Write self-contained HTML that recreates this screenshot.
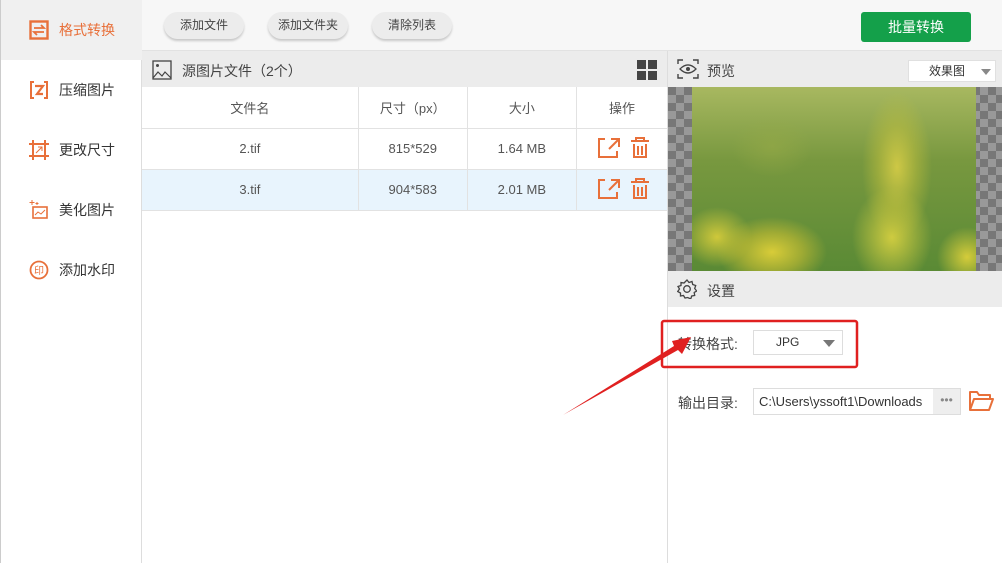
<!DOCTYPE html>
<html><head><meta charset="utf-8">
<style>
*{margin:0;padding:0;box-sizing:border-box}
body{width:1002px;height:563px;overflow:hidden;background:#fff;font-family:"Liberation Sans","Microsoft YaHei","Noto Sans CJK SC",sans-serif;color:#333;font-size:13px;position:relative}
.abs{position:absolute}
.side{left:0;top:0;width:142px;height:563px;background:#fff;border-right:1px solid #ddd;border-left:1px solid #ccc}
.si{position:absolute;left:0;width:141px;height:60px;display:flex;align-items:center;padding-left:28px;font-size:14px;color:#333}
.si svg{margin-right:10px}
.si.act{background:#f0f0f0;color:#e8703a}
.top{left:142px;top:0;width:860px;height:51px;background:#f7f7f7;border-bottom:1px solid #e2e2e2}
.btn{position:absolute;top:12px;height:27px;border-radius:14px;background:#ececec;box-shadow:0 2px 2px #c8c8c8;font-size:12px;color:#444;text-align:center;line-height:27px}
.green{left:861px;top:12px;width:110px;height:30px;background:#14a04a;color:#fff;border-radius:3px;font-size:14px;text-align:center;line-height:30px}
.hdr{background:#ececec;height:36px}
table{border-collapse:collapse}
td{border-right:1px solid #e2e2e2;border-bottom:1px solid #e2e2e2;text-align:center;font-size:13px;color:#555}
</style></head><body>
<div class="abs side">
 <div class="si act" style="top:0"><svg width="20" height="20" viewBox="0 0 20 20"><rect x="1.5" y="1.5" width="17" height="17" fill="none" stroke="#e8703a" stroke-width="2.4"/><path d="M5 8h10l-3-3M15 12H5l3 3" fill="none" stroke="#e8703a" stroke-width="1.8"/></svg>格式转换</div>
 <div class="si" style="top:60px"><svg width="20" height="20" viewBox="0 0 20 20"><path d="M5 2H2v16h3M15 2h3v16h-3" fill="none" stroke="#e8703a" stroke-width="2"/><path d="M6 6h8l-6 8h6" fill="none" stroke="#e8703a" stroke-width="2.2"/></svg>压缩图片</div>
 <div class="si" style="top:120px"><svg width="20" height="20" viewBox="0 0 20 20"><path d="M4 0v20M16 0v20M0 4h20M0 16h20" stroke="#e8703a" stroke-width="2"/><path d="M7 13l6-6M9 7h4v4" fill="none" stroke="#e8703a" stroke-width="1"/></svg>更改尺寸</div>
 <div class="si" style="top:180px"><svg width="20" height="20" viewBox="0 0 20 20"><rect x="4" y="7" width="14" height="11" fill="none" stroke="#e8703a" stroke-width="1.6"/><path d="M6 15l3-3 3 2 4-4" fill="none" stroke="#e8703a"/><path d="M3 0v5M0.5 2.5h5M8 2v3M6.5 3.5h3" stroke="#e8703a"/></svg>美化图片</div>
 <div class="si" style="top:240px"><svg width="20" height="20" viewBox="0 0 20 20"><circle cx="10" cy="10" r="8.5" fill="none" stroke="#e8703a" stroke-width="1.8"/><text x="10" y="14" font-size="10" text-anchor="middle" fill="#e8703a" font-family="Noto Sans CJK SC">印</text></svg>添加水印</div>
</div>
<div class="abs top">
 <div class="btn" style="left:22px;width:80px">添加文件</div>
 <div class="btn" style="left:126px;width:80px">添加文件夹</div>
 <div class="btn" style="left:230px;width:80px">清除列表</div>
</div>
<div class="abs green">批量转换</div>
<div class="abs hdr" style="left:142px;top:51px;width:525px"></div>
<svg class="abs" style="left:152px;top:60px" width="20" height="20" viewBox="0 0 20 20"><rect x="1" y="1" width="18" height="18" fill="none" stroke="#444" stroke-width="1.3"/><circle cx="5.5" cy="5.5" r="1.5" fill="#444"/><path d="M1 18l5-6 4 4 3-4 6 6" fill="none" stroke="#444" stroke-width="1.2"/></svg>
<div class="abs" style="left:182px;top:61px;font-size:14px;color:#444">源图片文件（2个）</div>
<svg class="abs" style="left:637px;top:60px" width="20" height="20"><rect x="0" y="0" width="9" height="9" fill="#444"/><rect x="11" y="0" width="9" height="9" fill="#444"/><rect x="0" y="11" width="9" height="9" fill="#444"/><rect x="11" y="11" width="9" height="9" fill="#444"/></svg>
<table class="abs" style="left:142px;top:87px;width:526px">
<tr style="height:41px"><td style="width:216px">文件名</td><td style="width:109px">尺寸（px）</td><td style="width:109px">大小</td><td style="width:91px">操作</td></tr>
<tr style="height:41px"><td>2.tif</td><td>815*529</td><td>1.64 MB</td><td class="ops"></td></tr>
<tr style="height:41px;background:#e8f4fd"><td>3.tif</td><td>904*583</td><td>2.01 MB</td><td></td></tr>
</table>
<svg class="abs" style="left:597px;top:137px" width="60" height="62" viewBox="0 0 60 62">
<g id="r" fill="none" stroke="#e8703a" stroke-width="2">
<path d="M8 2H2v18h18v-6M12 12l9-9M14 2h8v8"/>
<path d="M34 4h18M39 4V1h8v3M37 7v13h12V7M41 9v9M45 9v9" />
</g>
<use href="#r" y="41"/>
</svg>
<div class="abs" style="left:667px;top:51px;width:1px;height:512px;background:#ddd"></div>
<div class="abs hdr" style="left:668px;top:51px;width:334px"></div>
<svg class="abs" style="left:677px;top:59px" width="22" height="20" viewBox="0 0 22 20"><path d="M1 5V1h5M16 1h5v4M1 15v4h5M16 19h5v-4" fill="none" stroke="#444" stroke-width="1.4"/><path d="M3 10q8-8 16 0q-8 8-16 0z" fill="none" stroke="#444" stroke-width="1.3"/><circle cx="11" cy="10" r="2" fill="#444"/></svg>
<div class="abs" style="left:707px;top:61px;font-size:14px;color:#444">预览</div>
<div class="abs" style="left:908px;top:60px;width:88px;height:22px;background:#fff;border:1px solid #e0e0e0;font-size:12px;line-height:20px;padding-left:20px">效果图<span style="position:absolute;right:4px;top:8px;border:5px solid transparent;border-top:6px solid #888"></span></div>
<div class="abs" style="left:668px;top:87px;width:334px;height:184px;background-color:#777;background-image:linear-gradient(45deg,#999 25%,transparent 25%,transparent 75%,#999 75%),linear-gradient(45deg,#999 25%,transparent 25%,transparent 75%,#999 75%);background-size:16px 16px;background-position:0 0,8px 8px"></div>
<div class="abs" style="left:692px;top:87px;width:284px;height:184px;background:
radial-gradient(ellipse 35px 75px at 205px 80px,rgba(215,205,70,.9) 0%,rgba(190,190,60,.5) 55%,transparent 100%),
radial-gradient(ellipse 55px 35px at 80px 165px,#d8cc38 0%,rgba(200,190,50,.6) 55%,transparent 100%),
radial-gradient(ellipse 35px 30px at 25px 150px,#cfc83a 0%,transparent 100%),
radial-gradient(ellipse 40px 50px at 200px 150px,#cfcc40 0%,transparent 100%),
radial-gradient(ellipse 30px 30px at 275px 170px,#d5cc3a 0%,transparent 100%),
radial-gradient(ellipse 40px 30px at 80px 60px,rgba(150,170,70,.6) 0%,transparent 100%),
linear-gradient(180deg,#a8b860 0%,#78983f 40%,#5a8a35 100%)"></div>
<div class="abs hdr" style="left:668px;top:271px;width:334px"></div>
<svg class="abs" style="left:677px;top:279px" width="20" height="20" viewBox="0 0 20 20"><path d="M10 1l2 2.5 3-1 .7 3 3 1-1 3 2 2.5-2.5 1.5.5 3-3 .5-1 3-3-1.5L8 19l-1.5-2.5-3 .5v-3l-2.8-1.5L2.5 10 1 7.5l3-1V3.5l3 .5z" fill="none" stroke="#444" stroke-width="1.3"/><circle cx="10" cy="10" r="3.3" fill="none" stroke="#444" stroke-width="1.3"/></svg>
<div class="abs" style="left:707px;top:281px;font-size:14px;color:#444">设置</div>
<div class="abs" style="left:678px;top:334px;font-size:14px;color:#444">转换格式:</div>
<div class="abs" style="left:753px;top:330px;width:90px;height:25px;border:1px solid #ddd;background:#fff;font-size:12px;line-height:23px;padding-left:22px">JPG<span style="position:absolute;right:7px;top:9px;border:6px solid transparent;border-top:7px solid #777"></span></div>
<div class="abs" style="left:678px;top:393px;font-size:14px;color:#444">输出目录:</div>
<div class="abs" style="left:753px;top:388px;width:208px;height:27px;border:1px solid #ddd;background:#fff;font-size:13px;line-height:25px;padding-left:5px;color:#333">C:\Users\yssoft1\Downloads</div>
<div class="abs" style="left:933px;top:389px;width:27px;height:25px;background:#eee;color:#888;text-align:center;line-height:22px;font-size:12px">•••</div>
<svg class="abs" style="left:968px;top:389px" width="26" height="24" viewBox="0 0 26 24"><path d="M2 21V3h7l2 3h11v4M2 21l4-11h19l-4 11z" fill="none" stroke="#e8703a" stroke-width="2" stroke-linejoin="round"/></svg>
<svg class="abs" style="left:0;top:0" width="1002" height="563"><rect x="662" y="321" width="195" height="46" rx="2" fill="none" stroke="#e02020" stroke-width="2.5"/><path d="M563 415L674 346L672 341L691 337L682 354L678 350Z" fill="#e02020"/></svg>
</body></html>
